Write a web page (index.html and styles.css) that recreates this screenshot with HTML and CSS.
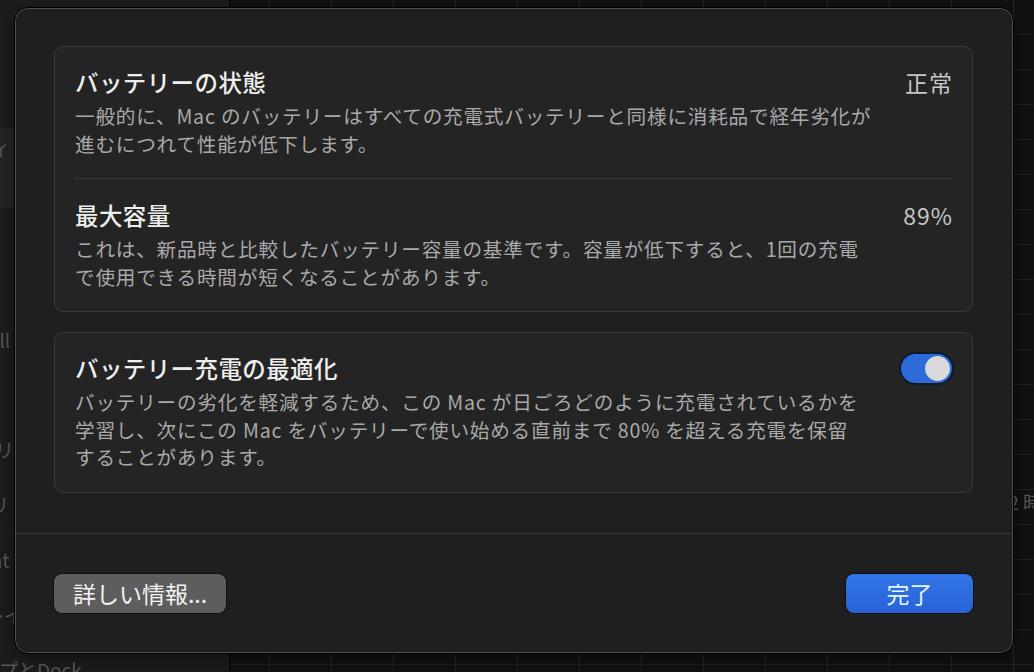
FILE: index.html
```html
<!DOCTYPE html>
<html lang="ja">
  <head>
    <meta charset="UTF-8" />
    <meta name="viewport" content="width=device-width, initial-scale=1.0" />
    <title>バッテリーの状態</title>
    <link rel="stylesheet" href="styles.css">
  </head>
  <body>
    <div class="window">
      <aside class="sidebar">
        <ul class="side-list">
          <li class="side-item selected">アクセシビリティ</li>
          <li class="side-item gap">Shell</li>
          <li class="side-item gap">セキュリ</li>
          <li class="side-item">デスクトリ</li>
          <li class="side-item">Spotlight</li>
          <li class="side-item">ディスプレイ</li>
          <li class="side-item">デスクトップとDock</li>
        </ul>
      </aside>
      <main class="main">
        <div class="chart-label">2 時</div>
      </main>
    </div>

    <div class="sheet">
      <div class="sheet-body">
        <section class="group">
          <div class="row">
            <div class="row-text">
              <h2 class="row-title">バッテリーの状態</h2>
              <p class="row-desc">一般的に、Mac のバッテリーはすべての充電式バッテリーと同様に消耗品で経年劣化が<br>進むにつれて性能が低下します。</p>
            </div>
            <span class="row-value">正常</span>
          </div>
          <div class="row">
            <div class="row-text">
              <h2 class="row-title">最大容量</h2>
              <p class="row-desc">これは、新品時と比較したバッテリー容量の基準です。容量が低下すると、1回の充電<br>で使用できる時間が短くなることがあります。</p>
            </div>
            <span class="row-value">89%</span>
          </div>
        </section>

        <section class="group">
          <div class="row">
            <div class="row-text">
              <h2 class="row-title">バッテリー充電の最適化</h2>
              <p class="row-desc">バッテリーの劣化を軽減するため、この Mac が日ごろどのように充電されているかを<br>学習し、次にこの Mac をバッテリーで使い始める直前まで 80% を超える充電を保留<br>することがあります。</p>
            </div>
            <span class="toggle on"><span class="knob"></span></span>
          </div>
        </section>
      </div>

      <div class="sheet-footer">
        <button class="btn btn-secondary">詳しい情報...</button>
        <button class="btn btn-primary">完了</button>
      </div>
    </div>
  </body>
</html>
```

FILE: styles.css
```css
* {
  box-sizing: border-box;
}
body {
  margin: 0;
  height: 672px;
  overflow: hidden;
  background-color: #141414;
  font-family: "Noto Sans CJK JP", "Noto Sans", sans-serif;
  color: #ececec;
}

/* window behind the sheet */
.window {
  display: grid;
  grid-template-columns: 230px 1fr;
  height: 672px;
}
.sidebar {
  background-color: #1d1d1d;
  border-right: 1px solid #050505;
  overflow: hidden;
}
.side-list {
  list-style: none;
  margin: 128px 0 0;
  padding: 0;
}
.side-item {
  height: 55px;
  line-height: 40px;
  font-size: 19px;
  color: #5a5a5a;
  white-space: nowrap;
}
.side-item.selected {
  height: 80px;
  margin-left: -140px;
  background-color: #262626;
  border-radius: 6px;
}
.side-item:nth-child(2) { margin-left: -34px; margin-top: 112px; }
.side-item:nth-child(3) { margin-left: -62px; margin-top: 55px; }
.side-item:nth-child(4) { margin-left: -86px; }
.side-item:nth-child(5) { margin-left: -72px; }
.side-item:nth-child(6) { margin-left: -90px; }
.side-item:nth-child(7) { margin-left: -96px; }
.main {
  position: relative;
  background-color: #111111;
  background-image:
    repeating-linear-gradient(90deg, transparent 0 39px, #262626 39px 40px, transparent 40px 62px),
    repeating-linear-gradient(180deg, transparent 0 34px, #222222 34px 35px);
}
.chart-label {
  position: absolute;
  right: -8px;
  top: 488px;
  font-size: 19px;
  color: #5c5c5c;
}

/* sheet */
.sheet {
  position: absolute;
  left: 14px;
  top: 7px;
  width: 1000px;
  height: 647px;
  display: flex;
  flex-direction: column;
  background-color: #1f1f1f;
  border: 1px solid #000;
  border-radius: 14px;
  box-shadow: inset 0 0 0 1px #505050, 0 6px 24px rgba(0, 0, 0, 0.4);
}
.sheet-body {
  flex: 1;
  padding: 38px 40px 0 39px;
}
.group {
  background-color: #242424;
  border: 1px solid #393939;
  border-radius: 9px;
  padding: 0 20px;
  margin-bottom: 20px;
}
.row {
  display: flex;
  align-items: flex-start;
  padding: 20px 0 21px;
}
.row + .row {
  border-top: 1px solid #393939;
  padding-top: 21px;
}
.row-text {
  flex: 1;
}
.row-title {
  margin: 0;
  font-size: 23.5px;
  line-height: 30px;
  font-weight: 500;
  letter-spacing: 0.4px;
  color: #eeeeee;
}
.row-desc {
  margin: 5px 0 0;
  font-size: 19.6px;
  line-height: 27.5px;
  letter-spacing: 0.8px;
  color: #a9a9a9;
  white-space: nowrap;
}
.row-value {
  font-size: 23px;
  line-height: 30px;
  letter-spacing: 1px;
  margin-right: -1px;
  color: #c6c6c6;
}

.toggle {
  position: relative;
  display: inline-block;
  width: 51px;
  height: 29px;
  margin-top: 1px;
  border-radius: 15px;
  background-color: #555;
  box-shadow: 0 0 0 2px #0c1a2c;
}
.toggle.on {
  background-color: #2c6ad9;
}
.toggle .knob {
  position: absolute;
  top: 2px;
  left: 2px;
  width: 25px;
  height: 25px;
  border-radius: 50%;
  background-color: #d9d9d9;
}
.toggle.on .knob {
  left: 24px;
}

.sheet-footer {
  display: flex;
  justify-content: space-between;
  align-items: center;
  height: 120px;
  padding: 0 40px 0 39px;
  border-top: 1px solid #3a3a3a;
}
.btn {
  height: 39px;
  border: none;
  border-radius: 8px;
  font-family: inherit;
  font-size: 23px;
  line-height: 39px;
  padding: 0;
  box-shadow: 0 0 0 1px rgba(0, 0, 0, 0.55);
}
.btn-secondary {
  width: 172px;
  background-color: #5d5d5d;
  color: #f2f2f2;
}
.btn-primary {
  width: 127px;
  background: linear-gradient(#3275e8, #2763d6);
  color: #e4f6ff;
}
```
